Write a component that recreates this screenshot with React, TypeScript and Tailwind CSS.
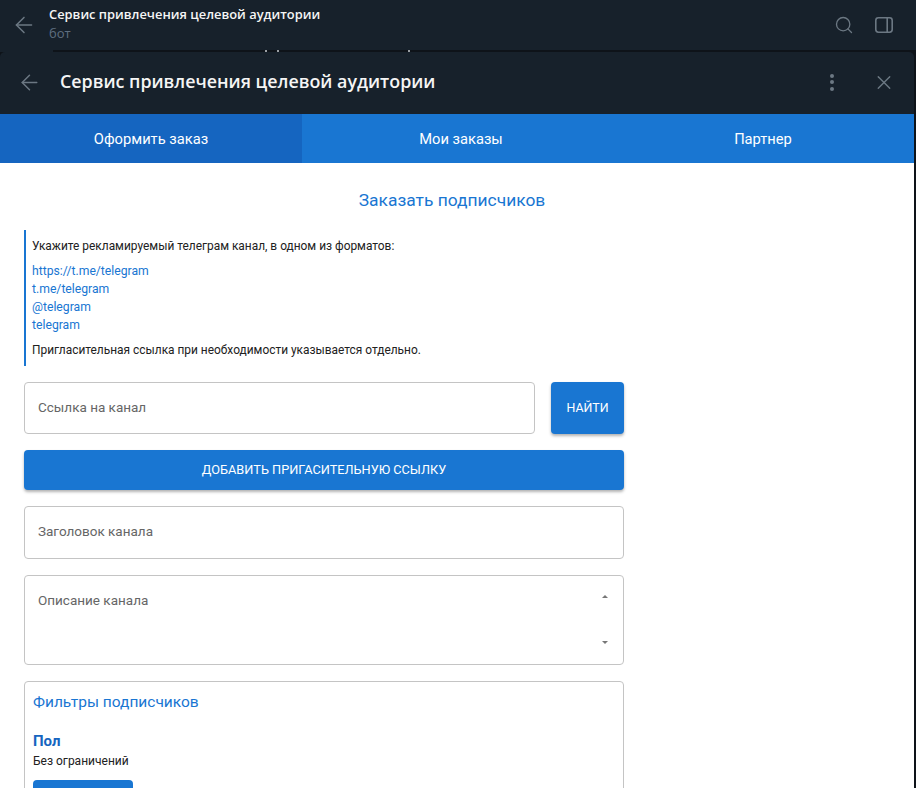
import { ArrowLeft, Search, X } from "lucide-react";

const sans = "font-['Roboto','Liberation_Sans',sans-serif]";
const tg = "font-['Open_Sans','Noto_Sans',sans-serif]";

function Field({ label, className }: { label: string; className: string }) {
  return (
    <div className={`flex items-center rounded border border-[#c4c4c4] bg-white pb-[2px] pl-[13px] text-[13.5px] text-[#666666] ${className}`}>
      {label}
    </div>
  );
}

export default function App() {
  return (
    <div className={`h-[788px] w-[916px] overflow-hidden bg-[#0e1319] ${sans}`}>
      <header className={`flex h-[50px] items-center bg-[#17212b] ${tg}`}>
        <ArrowLeft className="ml-[11px] h-[26px] w-[26px] text-[#6c7883]" strokeWidth={1.4} />
        <div className="ml-[12px] flex-1 pb-[3px]">
          <div className="text-[12.9px] leading-[16px] font-semibold text-[#f5f5f5]">Сервис привлечения целевой аудитории</div>
          <div className="mt-[3px] text-[13px] leading-[16px] text-[#5f6f80]">бот</div>
        </div>
        <Search className="mr-[1px] h-[20px] w-[20px] text-[#6c7883]" strokeWidth={1.6} />
        <svg viewBox="0 0 18 16" className="mr-[23px] ml-[20px] h-[16px] w-[18px] text-[#6c7883]" fill="none" stroke="currentColor" strokeWidth="1.6">
          <rect x="0.8" y="0.8" width="16.4" height="14.4" rx="2.6" />
          <path d="M12.2 1v14" />
        </svg>
      </header>
      <div className="relative h-[2px] bg-[#0e1319]">
        <span className="absolute top-0 left-0 h-[2px] w-[53px] bg-[#17212b]" />
        <span className="absolute top-0 left-[265px] h-[2px] w-[2px] bg-[#9a9fa4]" />
        <span className="absolute top-0 left-[277px] h-[2px] w-[2px] bg-[#9a9fa4]" />
        <span className="absolute top-0 left-[408px] h-[2px] w-[2px] bg-[#9a9fa4]" />
      </div>
      <div className="mr-[2px] rounded-t-[5px] bg-[#17212b]">
        <div className={`flex h-[62px] items-center ${tg}`}>
          <ArrowLeft className="ml-[16px] h-[27px] w-[27px] pb-[2px] text-[#6c7883]" strokeWidth={1.4} />
          <h1 className="ml-[17px] flex-1 pb-[3px] text-[17.85px] font-semibold text-[#f5f5f5]">Сервис привлечения целевой аудитории</h1>
          <div className="mr-[38px] flex flex-col gap-[2.5px] pb-[2px]">
            <span className="h-[4px] w-[4px] rounded-full bg-[#6c7883]" />
            <span className="h-[4px] w-[4px] rounded-full bg-[#6c7883]" />
            <span className="h-[4px] w-[4px] rounded-full bg-[#6c7883]" />
          </div>
          <X className="mr-[18px] h-[24px] w-[24px] pb-[1px] text-[#6c7883]" strokeWidth={1.4} />
        </div>
        <nav className="flex h-[49px] items-center bg-[#1976d2] pt-[1px] text-[14.7px] text-white">
          <div className="-mt-[1px] flex h-[49px] w-[302px] items-center justify-center bg-[#1565c0] pt-[1px]">Оформить заказ</div>
          <div className="flex w-[318px] items-center justify-center">Мои заказы</div>
          <div className="flex w-[286px] items-center justify-center">Партнер</div>
        </nav>
      </div>
      <main className="mr-[2px] h-[625px] bg-white px-[24px]">
        <div className="w-[600px]">
          <h2 className="mt-0 -ml-[24px] w-[904px] pt-[25px] text-center text-[17.4px] leading-[24px] text-[#1976d2]">Заказать подписчиков</h2>
          <section className="mt-[18px] h-[136px] border-l-[2px] border-[#1976d2] pt-[7px] pl-[6px] text-[11.92px] leading-[18px] text-[#212121]">
            <p>Укажите рекламируемый телеграм канал, в одном из форматов:</p>
            <div className="mt-[7px] text-[12.2px] text-[#1976d2]">
              <div>https://t.me/telegram</div>
              <div>t.me/telegram</div>
              <div>@telegram</div>
              <div>telegram</div>
            </div>
            <p className="mt-[7px]">Пригласительная ссылка при необходимости указывается отдельно.</p>
          </section>
          <div className="mt-[16px] flex gap-[16px]">
            <Field label="Ссылка на канал" className="h-[52px] flex-1" />
            <button className="h-[52px] w-[73px] rounded bg-[#1976d2] text-[12.4px] font-normal text-white shadow-[0_2px_3px_rgba(0,0,0,0.3)]">НАЙТИ</button>
          </div>
          <button className="mt-[16px] h-[40px] w-full rounded bg-[#1976d2] text-[12.75px] font-normal text-white shadow-[0_2px_3px_rgba(0,0,0,0.3)]">ДОБАВИТЬ ПРИГАСИТЕЛЬНУЮ ССЫЛКУ</button>
          <Field label="Заголовок канала" className="mt-[16px] h-[53px]" />
          <div className="relative mt-[16px] h-[90px] rounded border border-[#c4c4c4] pt-[14px] pl-[13px] text-[13.5px] text-[#666666]">
            Описание канала
            <span className="absolute top-[19px] right-[15px] h-0 w-0 border-x-[3px] border-b-[3px] border-x-transparent border-b-[#777777]" />
            <span className="absolute top-[65px] right-[15px] h-0 w-0 border-x-[3px] border-t-[3px] border-x-transparent border-t-[#777777]" />
          </div>
          <section className="mt-[16px] h-[200px] rounded border border-[#c4c4c4] px-[8px]">
            <h3 className="mt-[9px] text-[15.5px] leading-[22px] text-[#1976d2]">Фильтры подписчиков</h3>
            <div className="mt-[18px] text-[15px] leading-[20px] font-bold text-[#1565c0]">Пол</div>
            <div className="mt-[1px] text-[12px] leading-[18px] text-[#212121]">Без ограничений</div>
            <div className="mt-[10px] h-[36px] w-[100px] rounded bg-[#1976d2]" />
          </section>
        </div>
      </main>
    </div>
  );
}
